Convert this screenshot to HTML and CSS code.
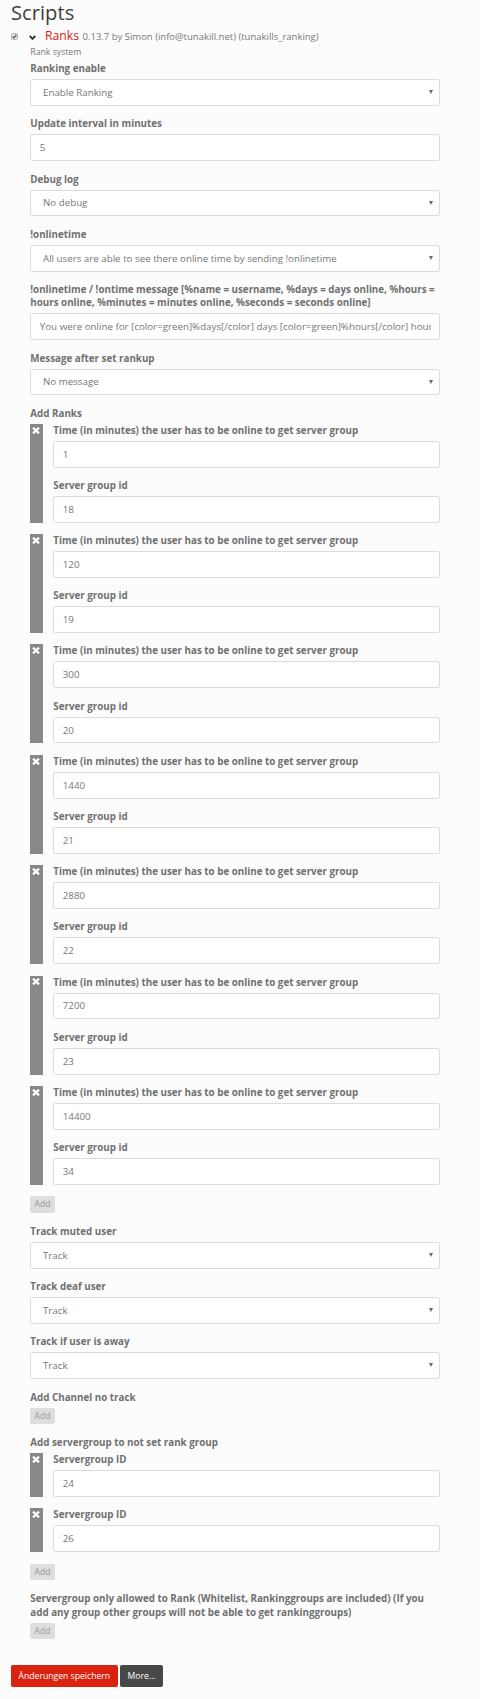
FILE: index.html
```html
<!DOCTYPE html>
<html lang="en">
<head>
<meta charset="utf-8">
<title>Scripts</title>
<link rel="stylesheet" href="styles.css">
</head>
<body>
<div class="page">
  <h2 class="title">Scripts</h2>
  <div class="script">
    <div class="script-head">
      <svg class="cb" width="7" height="7" viewBox="0 0 7 7"><rect x="0.5" y="0.5" width="6" height="6" rx="1" fill="#e2e2e2" stroke="#b4b4b4"/><path d="M1.6 3.6 L2.9 4.9 L5.4 1.9" fill="none" stroke="#555" stroke-width="1.2"/></svg>
      <svg class="chev" width="7" height="5" viewBox="0 0 7 5"><path d="M0.8 1 L3.5 3.8 L6.2 1" fill="none" stroke="#333" stroke-width="1.9"/></svg>
      <span class="name">Ranks</span>
      <span class="meta">0.13.7 by Simon (info@tunakill.net) (tunakills_ranking)</span>
    </div>
    <div class="script-body">
      <div class="desc">Rank system</div>

      <div class="group">
        <label class="lbl">Ranking enable</label>
        <div class="sel"><select class="ctrl"><option>Enable Ranking</option></select></div>
      </div>
      <div class="group">
        <label class="lbl">Update interval in minutes</label>
        <input class="ctrl" type="text" value="5">
      </div>
      <div class="group">
        <label class="lbl">Debug log</label>
        <div class="sel"><select class="ctrl"><option>No debug</option></select></div>
      </div>
      <div class="group">
        <label class="lbl">!onlinetime</label>
        <div class="sel"><select class="ctrl"><option>All users are able to see there online time by sending !onlinetime</option></select></div>
      </div>
      <div class="group">
        <label class="lbl">!onlinetime / !ontime message [%name = username, %days = days online, %hours = hours online, %minutes = minutes online, %seconds = seconds online]</label>
        <input class="ctrl" type="text" value="You were online for [color=green]%days[/color] days [color=green]%hours[/color] hours [color=green]%minutes[/color] minutes and [color=green]%seconds[/color] seconds">
      </div>
      <div class="group">
        <label class="lbl">Message after set rankup</label>
        <div class="sel"><select class="ctrl"><option>No message</option></select></div>
      </div>

      <div class="group list">
        <label class="lbl">Add Ranks</label>
        <div class="item">
          <div class="remove"><svg class="x" width="8" height="7" viewBox="0 0 8 7"><path d="M1 0.6 L7 6.4 M7 0.6 L1 6.4" stroke="#fff" stroke-width="2.2"/></svg></div>
          <div class="item-body">
            <div class="group"><label class="lbl">Time (in minutes) the user has to be online to get server group</label><input class="ctrl" type="text" value="1"></div>
            <div class="group"><label class="lbl">Server group id</label><input class="ctrl" type="text" value="18"></div>
          </div>
        </div>
        <div class="item">
          <div class="remove"><svg class="x" width="8" height="7" viewBox="0 0 8 7"><path d="M1 0.6 L7 6.4 M7 0.6 L1 6.4" stroke="#fff" stroke-width="2.2"/></svg></div>
          <div class="item-body">
            <div class="group"><label class="lbl">Time (in minutes) the user has to be online to get server group</label><input class="ctrl" type="text" value="120"></div>
            <div class="group"><label class="lbl">Server group id</label><input class="ctrl" type="text" value="19"></div>
          </div>
        </div>
        <div class="item">
          <div class="remove"><svg class="x" width="8" height="7" viewBox="0 0 8 7"><path d="M1 0.6 L7 6.4 M7 0.6 L1 6.4" stroke="#fff" stroke-width="2.2"/></svg></div>
          <div class="item-body">
            <div class="group"><label class="lbl">Time (in minutes) the user has to be online to get server group</label><input class="ctrl" type="text" value="300"></div>
            <div class="group"><label class="lbl">Server group id</label><input class="ctrl" type="text" value="20"></div>
          </div>
        </div>
        <div class="item">
          <div class="remove"><svg class="x" width="8" height="7" viewBox="0 0 8 7"><path d="M1 0.6 L7 6.4 M7 0.6 L1 6.4" stroke="#fff" stroke-width="2.2"/></svg></div>
          <div class="item-body">
            <div class="group"><label class="lbl">Time (in minutes) the user has to be online to get server group</label><input class="ctrl" type="text" value="1440"></div>
            <div class="group"><label class="lbl">Server group id</label><input class="ctrl" type="text" value="21"></div>
          </div>
        </div>
        <div class="item">
          <div class="remove"><svg class="x" width="8" height="7" viewBox="0 0 8 7"><path d="M1 0.6 L7 6.4 M7 0.6 L1 6.4" stroke="#fff" stroke-width="2.2"/></svg></div>
          <div class="item-body">
            <div class="group"><label class="lbl">Time (in minutes) the user has to be online to get server group</label><input class="ctrl" type="text" value="2880"></div>
            <div class="group"><label class="lbl">Server group id</label><input class="ctrl" type="text" value="22"></div>
          </div>
        </div>
        <div class="item">
          <div class="remove"><svg class="x" width="8" height="7" viewBox="0 0 8 7"><path d="M1 0.6 L7 6.4 M7 0.6 L1 6.4" stroke="#fff" stroke-width="2.2"/></svg></div>
          <div class="item-body">
            <div class="group"><label class="lbl">Time (in minutes) the user has to be online to get server group</label><input class="ctrl" type="text" value="7200"></div>
            <div class="group"><label class="lbl">Server group id</label><input class="ctrl" type="text" value="23"></div>
          </div>
        </div>
        <div class="item">
          <div class="remove"><svg class="x" width="8" height="7" viewBox="0 0 8 7"><path d="M1 0.6 L7 6.4 M7 0.6 L1 6.4" stroke="#fff" stroke-width="2.2"/></svg></div>
          <div class="item-body">
            <div class="group"><label class="lbl">Time (in minutes) the user has to be online to get server group</label><input class="ctrl" type="text" value="14400"></div>
            <div class="group"><label class="lbl">Server group id</label><input class="ctrl" type="text" value="34"></div>
          </div>
        </div>
        <button class="add" type="button">Add</button>
      </div>

      <div class="group">
        <label class="lbl">Track muted user</label>
        <div class="sel"><select class="ctrl"><option>Track</option></select></div>
      </div>
      <div class="group">
        <label class="lbl">Track deaf user</label>
        <div class="sel"><select class="ctrl"><option>Track</option></select></div>
      </div>
      <div class="group">
        <label class="lbl">Track if user is away</label>
        <div class="sel"><select class="ctrl"><option>Track</option></select></div>
      </div>

      <div class="group list">
        <label class="lbl">Add Channel no track</label>
        <button class="add" type="button">Add</button>
      </div>

      <div class="group list">
        <label class="lbl">Add servergroup to not set rank group</label>
        <div class="item">
          <div class="remove"><svg class="x" width="8" height="7" viewBox="0 0 8 7"><path d="M1 0.6 L7 6.4 M7 0.6 L1 6.4" stroke="#fff" stroke-width="2.2"/></svg></div>
          <div class="item-body">
            <div class="group"><label class="lbl">Servergroup ID</label><input class="ctrl" type="text" value="24"></div>
          </div>
        </div>
        <div class="item">
          <div class="remove"><svg class="x" width="8" height="7" viewBox="0 0 8 7"><path d="M1 0.6 L7 6.4 M7 0.6 L1 6.4" stroke="#fff" stroke-width="2.2"/></svg></div>
          <div class="item-body">
            <div class="group"><label class="lbl">Servergroup ID</label><input class="ctrl" type="text" value="26"></div>
          </div>
        </div>
        <button class="add" type="button">Add</button>
      </div>

      <div class="group list">
        <label class="lbl">Servergroup only allowed to Rank (Whitelist, Rankinggroups are included) (If you add any group other groups will not be able to get rankinggroups)</label>
        <button class="add" type="button">Add</button>
      </div>
    </div>
  </div>
  <div class="actions">
    <button class="btn btn-red" type="button">Änderungen speichern</button>
    <button class="btn btn-dark" type="button">More...</button>
  </div>
</div>
</body>
</html>
```
FILE: styles.css
```css
html, body {
  margin: 0;
  padding: 0;
}
body {
  background: #fcfcfc;
  font-family: "Open Sans", "Liberation Sans", sans-serif;
  font-size: 9.36px;
  line-height: 13.37px;
  color: #777;
}
.page {
  padding: 0 39.7px 0 11px;
}
.title {
  margin: 0;
  font-size: 20.2px;
  line-height: 24px;
  font-weight: 400;
  color: #404040;
}
.script-head {
  display: flex;
  align-items: baseline;
  box-sizing: border-box;
  height: 21.7px;
  padding-top: 3px;
  line-height: 17.7px;
}
.cb {
  flex: none;
}
.chev {
  flex: none;
  margin-left: 11px;
  margin-bottom: 2.3px;
}
.name {
  margin-left: 9px;
  font-size: 12.24px;
  color: #d9230f;
}
.meta {
  margin-left: 3.4px;
  font-size: 9.5px;
  color: #777;
}
.script-body {
  padding-left: 19.3px;
}
.desc {
  font-size: 8.7px;
  line-height: 12.96px;
  margin-bottom: 3.6px;
}
.group {
  margin-bottom: 11.4px;
}
.group.list {
  margin-bottom: 12.3px;
}
.lbl {
  display: block;
  font-weight: 700;
  font-size: 9.8px;
  color: #707070;
  margin-bottom: 3.6px;
}
.ctrl {
  display: block;
  box-sizing: border-box;
  width: 100%;
  height: 26.83px;
  margin: 0;
  padding: 0 8.5px;
  border: 1px solid #dcdcdc;
  border-radius: 2.2px;
  background: #fff;
  font-family: inherit;
  font-size: 9.75px;
  color: #777;
  outline: none;
}
.sel {
  position: relative;
}
.sel .ctrl {
  appearance: none;
  -webkit-appearance: none;
  padding-left: 11.7px;
  padding-right: 20px;
}
.sel::after {
  content: "";
  position: absolute;
  right: 7px;
  top: 11px;
  border-left: 2.6px solid transparent;
  border-right: 2.6px solid transparent;
  border-top: 4.2px solid #6a6a6a;
  pointer-events: none;
}
.item {
  display: flex;
  gap: 10.6px;
  margin-bottom: 11.4px;
}
.remove {
  flex: none;
  width: 12.4px;
  background: #888;
  display: flex;
  justify-content: center;
  align-items: flex-start;
  padding-top: 2.9px;
  box-sizing: border-box;
}
.x {
  display: block;
  margin-left: -1px;
}
.item-body {
  flex: 1;
  min-width: 0;
}
.item-body .group:last-child {
  margin-bottom: 0;
}
.add {
  display: block;
  box-sizing: border-box;
  height: 16.4px;
  margin: 0;
  padding: 0 4.3px;
  border: 0;
  border-radius: 2px;
  background: #dedede;
  color: #9a9a9a;
  font-family: inherit;
  font-size: 8.64px;
  line-height: 16.4px;
}
.actions {
  display: flex;
  gap: 2.3px;
  margin-top: 26.3px;
}
.btn {
  box-sizing: border-box;
  height: 21.4px;
  margin: 0;
  padding: 0 7.6px;
  border: 0;
  border-radius: 2px;
  font-family: inherit;
  font-size: 8.64px;
  line-height: 20px;
  color: #fff;
}
.btn-red {
  background: #d9230f;
}
.btn-dark {
  background: #474949;
}
```
